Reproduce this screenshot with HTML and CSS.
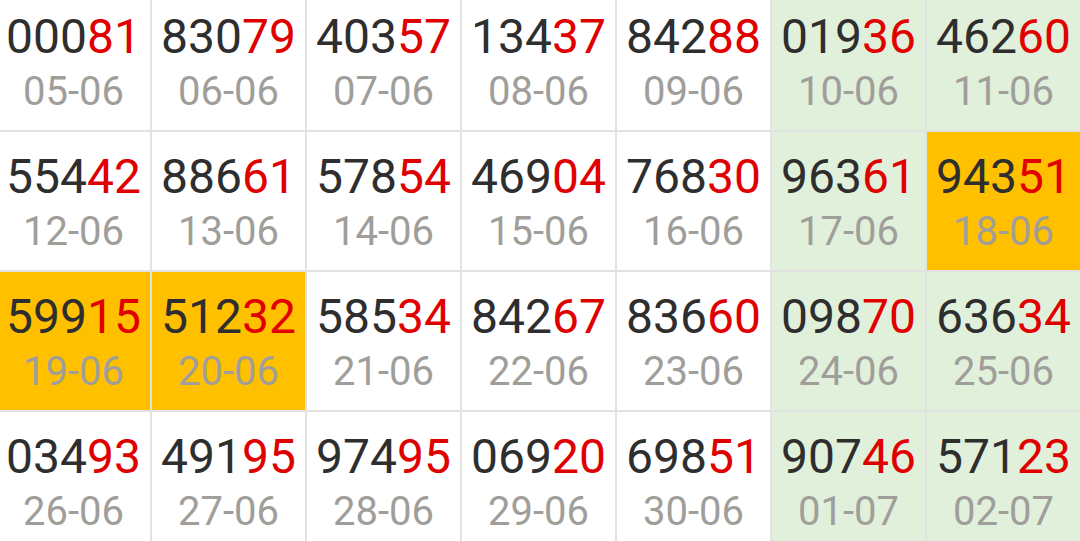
FILE: index.html
```html
<!DOCTYPE html>
<html lang="en">
<head>
  <meta charset="UTF-8">
  <title>Results</title>
  <link rel="stylesheet" href="styles.css">
</head>
<body>
  <div class="board">
    <!-- week 1 -->
    <div class="cell"><div class="num">000<span>81</span></div><div class="date">05-06</div></div>
    <div class="cell"><div class="num">830<span>79</span></div><div class="date">06-06</div></div>
    <div class="cell"><div class="num">403<span>57</span></div><div class="date">07-06</div></div>
    <div class="cell"><div class="num">134<span>37</span></div><div class="date">08-06</div></div>
    <div class="cell"><div class="num">842<span>88</span></div><div class="date">09-06</div></div>
    <div class="cell weekend"><div class="num">019<span>36</span></div><div class="date">10-06</div></div>
    <div class="cell weekend"><div class="num">462<span>60</span></div><div class="date">11-06</div></div>

    <!-- week 2 -->
    <div class="cell"><div class="num">554<span>42</span></div><div class="date">12-06</div></div>
    <div class="cell"><div class="num">886<span>61</span></div><div class="date">13-06</div></div>
    <div class="cell"><div class="num">578<span>54</span></div><div class="date">14-06</div></div>
    <div class="cell"><div class="num">469<span>04</span></div><div class="date">15-06</div></div>
    <div class="cell"><div class="num">768<span>30</span></div><div class="date">16-06</div></div>
    <div class="cell weekend"><div class="num">963<span>61</span></div><div class="date">17-06</div></div>
    <div class="cell hit"><div class="num">943<span>51</span></div><div class="date">18-06</div></div>

    <!-- week 3 -->
    <div class="cell hit"><div class="num">599<span>15</span></div><div class="date">19-06</div></div>
    <div class="cell hit"><div class="num">512<span>32</span></div><div class="date">20-06</div></div>
    <div class="cell"><div class="num">585<span>34</span></div><div class="date">21-06</div></div>
    <div class="cell"><div class="num">842<span>67</span></div><div class="date">22-06</div></div>
    <div class="cell"><div class="num">836<span>60</span></div><div class="date">23-06</div></div>
    <div class="cell weekend"><div class="num">098<span>70</span></div><div class="date">24-06</div></div>
    <div class="cell weekend"><div class="num">636<span>34</span></div><div class="date">25-06</div></div>

    <!-- week 4 -->
    <div class="cell"><div class="num">034<span>93</span></div><div class="date">26-06</div></div>
    <div class="cell"><div class="num">491<span>95</span></div><div class="date">27-06</div></div>
    <div class="cell"><div class="num">974<span>95</span></div><div class="date">28-06</div></div>
    <div class="cell"><div class="num">069<span>20</span></div><div class="date">29-06</div></div>
    <div class="cell"><div class="num">698<span>51</span></div><div class="date">30-06</div></div>
    <div class="cell weekend"><div class="num">907<span>46</span></div><div class="date">01-07</div></div>
    <div class="cell weekend"><div class="num">571<span>23</span></div><div class="date">02-07</div></div>
  </div>
</body>
</html>
```

FILE: styles.css
```css
html, body {
  overflow: hidden;
}

body {
  margin: 0;
  background: #fff;
  font-family: Roboto, 'Noto Sans', sans-serif;
}

/* Grid lines come from the board background showing through the gaps */
.board {
  display: grid;
  grid-template-columns: repeat(7, 153px);
  grid-auto-rows: 138px;
  gap: 2px;
  width: max-content;
  margin: -8px 0 0 -3px;
  background: #e2e2e2;
}

.cell {
  background: #fff;
  padding-top: 17px;
  text-align: center;
  box-sizing: border-box;
}

.cell.weekend {
  background: #e1f0da;
}

.cell.hit {
  background: #ffc000;
}

.num {
  font-size: 48px;
  line-height: 56px;
  color: #2e2e2e;
}

.num span {
  color: #e00000;
}

.date {
  margin-top: 4px;
  font-size: 40px;
  line-height: 46px;
  color: #a09e9a;
}
```
